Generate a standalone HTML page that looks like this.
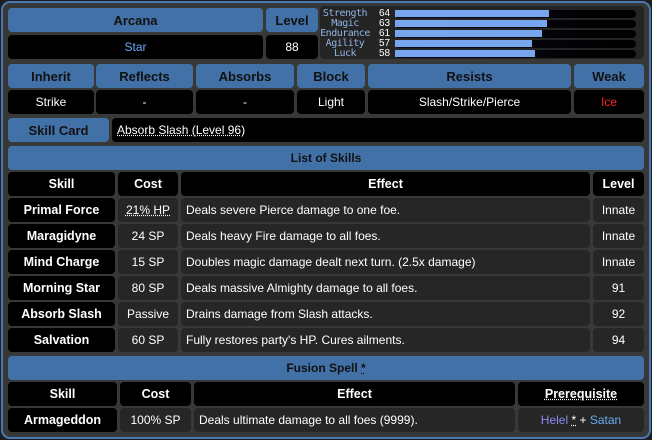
<!DOCTYPE html><html><head><style>
*{margin:0;padding:0;box-sizing:border-box}
body{width:652px;height:440px;background:#1e1e1e;font-family:"Liberation Sans",sans-serif;font-size:12px;position:relative;overflow:hidden}
#f{position:absolute;left:1px;top:1px;width:650px;height:438px;border:2px solid #4a78b0;border-radius:9px;background:#383838}
.c{position:absolute;display:flex;align-items:center;justify-content:center;border-radius:4px;color:#fff;white-space:nowrap}
.h{background:#4271a8;color:#111;font-weight:bold;font-size:13px}
.b{background:#000}
.g{background:#262626}
.th{background:#000;font-weight:bold;font-size:12.5px}
.l{justify-content:flex-start;padding-left:5px}
.u{text-decoration:underline dotted}
.s{position:absolute;font-size:10px;color:#8fb4e8;font-family:"DejaVu Sans Mono",monospace;text-align:center;width:50px;left:320px;line-height:10px;letter-spacing:-0.5px}
.n{position:absolute;left:379px;font-size:10px;color:#fff;line-height:10px}
.tr{position:absolute;left:395px;width:241px;height:8px;border-radius:4px;background:linear-gradient(90deg,#0b0b18,#000)}
.fl{position:absolute;left:0;top:0;height:7px;background:#78a6ee}
</style></head><body><div id="f"></div>
<div class="c h" style="left:8px;top:8px;width:255px;height:24px">Arcana</div>
<div class="c h" style="left:266px;top:8px;width:52px;height:24px">Level</div>
<div class="c b" style="left:8px;top:35px;width:255px;height:24px;color:#6aaaf5">Star</div>
<div class="c b" style="left:266px;top:35px;width:52px;height:24px">88</div>
<div class="c" style="left:320px;top:6px;width:324px;height:53px;background:#242424"></div>
<div class="s" style="top:9px">Strength</div><div class="s" style="top:19px">Magic</div><div class="s" style="top:29px">Endurance</div><div class="s" style="top:39px">Agility</div><div class="s" style="top:49px">Luck</div>
<div class="n" style="top:9px">64</div><div class="n" style="top:19px">63</div><div class="n" style="top:29px">61</div><div class="n" style="top:39px">57</div><div class="n" style="top:49px">58</div>
<div class="tr" style="top:10px"><div class="fl" style="width:154px"></div></div>
<div class="tr" style="top:20px"><div class="fl" style="width:152px"></div></div>
<div class="tr" style="top:30px"><div class="fl" style="width:147px"></div></div>
<div class="tr" style="top:40px"><div class="fl" style="width:137px"></div></div>
<div class="tr" style="top:50px"><div class="fl" style="width:140px"></div></div>

<div class="c h" style="left:8px;top:64px;width:86px;height:24px">Inherit</div>
<div class="c h" style="left:96px;top:64px;width:97px;height:24px">Reflects</div>
<div class="c h" style="left:196px;top:64px;width:98px;height:24px">Absorbs</div>
<div class="c h" style="left:297px;top:64px;width:68px;height:24px">Block</div>
<div class="c h" style="left:368px;top:64px;width:203px;height:24px">Resists</div>
<div class="c h" style="left:574px;top:64px;width:70px;height:24px">Weak</div>
<div class="c b" style="left:8px;top:90px;width:86px;height:24px">Strike</div>
<div class="c b" style="left:96px;top:90px;width:97px;height:24px">-</div>
<div class="c b" style="left:196px;top:90px;width:98px;height:24px">-</div>
<div class="c b" style="left:297px;top:90px;width:68px;height:24px">Light</div>
<div class="c b" style="left:368px;top:90px;width:203px;height:24px">Slash/Strike/Pierce</div>
<div class="c b" style="left:574px;top:90px;width:70px;height:24px;color:#f22">Ice</div>
<div class="c h" style="left:8px;top:118px;width:101px;height:24px">Skill Card</div>
<div class="c b l u" style="left:112px;top:118px;width:532px;height:24px">Absorb Slash (Level 96)</div>
<div class="c h" style="left:8px;top:146px;width:636px;height:24px;font-size:12px">List of Skills</div>

<div class="c th" style="left:8px;top:172px;width:107px;height:24px">Skill</div>
<div class="c th" style="left:118px;top:172px;width:60px;height:24px">Cost</div>
<div class="c th" style="left:181px;top:172px;width:409px;height:24px">Effect</div>
<div class="c th" style="left:593px;top:172px;width:51px;height:24px">Level</div>

<div class="c th" style="left:8px;top:198px;width:107px;height:24px">Primal Force</div><div class="c g u" style="left:118px;top:198px;width:60px;height:24px">21% HP</div><div class="c g l" style="left:181px;top:198px;width:409px;height:24px">Deals severe Pierce damage to one foe.</div><div class="c g" style="left:593px;top:198px;width:51px;height:24px">Innate</div>
<div class="c th" style="left:8px;top:224px;width:107px;height:24px">Maragidyne</div><div class="c g" style="left:118px;top:224px;width:60px;height:24px">24 SP</div><div class="c g l" style="left:181px;top:224px;width:409px;height:24px">Deals heavy Fire damage to all foes.</div><div class="c g" style="left:593px;top:224px;width:51px;height:24px">Innate</div>
<div class="c th" style="left:8px;top:250px;width:107px;height:24px">Mind Charge</div><div class="c g" style="left:118px;top:250px;width:60px;height:24px">15 SP</div><div class="c g l" style="left:181px;top:250px;width:409px;height:24px">Doubles magic damage dealt next turn. (2.5x damage)</div><div class="c g" style="left:593px;top:250px;width:51px;height:24px">Innate</div>
<div class="c th" style="left:8px;top:276px;width:107px;height:24px">Morning Star</div><div class="c g" style="left:118px;top:276px;width:60px;height:24px">80 SP</div><div class="c g l" style="left:181px;top:276px;width:409px;height:24px">Deals massive Almighty damage to all foes.</div><div class="c g" style="left:593px;top:276px;width:51px;height:24px">91</div>
<div class="c th" style="left:8px;top:302px;width:107px;height:24px">Absorb Slash</div><div class="c g" style="left:118px;top:302px;width:60px;height:24px">Passive</div><div class="c g l" style="left:181px;top:302px;width:409px;height:24px">Drains damage from Slash attacks.</div><div class="c g" style="left:593px;top:302px;width:51px;height:24px">92</div>
<div class="c th" style="left:8px;top:328px;width:107px;height:24px">Salvation</div><div class="c g" style="left:118px;top:328px;width:60px;height:24px">60 SP</div><div class="c g l" style="left:181px;top:328px;width:409px;height:24px">Fully restores party's HP. Cures ailments.</div><div class="c g" style="left:593px;top:328px;width:51px;height:24px">94</div>

<div class="c h" style="left:8px;top:356px;width:636px;height:24px;font-size:12px">Fusion Spell&nbsp;<span class="u">*</span></div>
<div class="c th" style="left:8px;top:382px;width:109px;height:24px">Skill</div>
<div class="c th" style="left:120px;top:382px;width:71px;height:24px">Cost</div>
<div class="c th" style="left:194px;top:382px;width:321px;height:24px">Effect</div>
<div class="c th u" style="left:518px;top:382px;width:126px;height:24px">Prerequisite</div>
<div class="c th" style="left:8px;top:408px;width:109px;height:24px">Armageddon</div>
<div class="c g" style="left:120px;top:408px;width:71px;height:24px">100% SP</div>
<div class="c g l" style="left:194px;top:408px;width:321px;height:24px">Deals ultimate damage to all foes (9999).</div>
<div class="c g" style="left:518px;top:408px;width:126px;height:24px"><span style="color:#8c8cf0">Helel</span>&nbsp;<span class="u">*</span>&nbsp;+&nbsp;<span style="color:#6aaaf5">Satan</span></div>
</body></html>
